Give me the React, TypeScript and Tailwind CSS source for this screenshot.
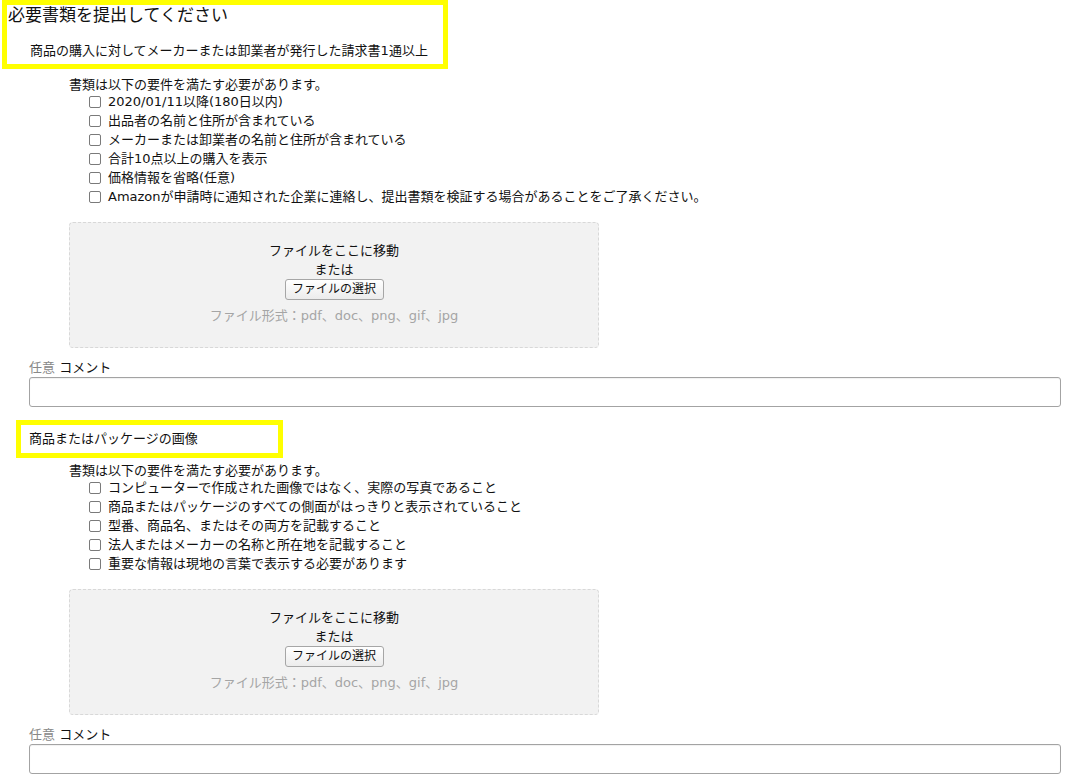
import React from "react";

const Check = ({ label }: { label: string }) => (
  <div className="flex items-center h-[19px] leading-[19px]">
    <span className="inline-block w-[12px] h-[12px] border border-[#7a7a7a] rounded-[2px] bg-white mr-[7px] ml-[-1px] shrink-0"></span>
    <span>{label}</span>
  </div>
);

const DropZone = () => (
  <div className="ml-[69px] w-[530px] h-[126px] bg-[#f2f2f2] border border-dashed border-[#d8d8d8] rounded-[4px] flex flex-col items-center pt-[18px] text-[13px] text-[#111]">
    <div className="leading-[19px]">ファイルをここに移動</div>
    <div className="leading-[19px]">または</div>
    <button className="h-[21px] w-[99px] text-[12px] leading-[19px] border border-[#a6a6a6] rounded-[3px] bg-gradient-to-b from-white to-[#ececec] text-[#111]">
      ファイルの選択
    </button>
    <div className="mt-[6px] leading-[19px] text-[#a5a5a5]">ファイル形式：pdf、doc、png、gif、jpg</div>
  </div>
);

const Comment = () => (
  <div className="pl-[29px] pr-[25px] mt-[11px]">
    <div className="text-[13px] leading-[18px]">
      <span className="text-[#888]">任意</span> <span className="text-[#111]">コメント</span>
    </div>
    <div className="h-[30px] border border-[#a3a3a3] rounded-[3px] bg-white shadow-[inset_0_1px_1px_rgba(0,0,0,0.06)]"></div>
  </div>
);

export default function App() {
  const req1 = [
    "2020/01/11以降(180日以内)",
    "出品者の名前と住所が含まれている",
    "メーカーまたは卸業者の名前と住所が含まれている",
    "合計10点以上の購入を表示",
    "価格情報を省略(任意)",
    "Amazonが申請時に通知された企業に連絡し、提出書類を検証する場合があることをご了承ください。",
  ];
  const req2 = [
    "コンピューターで作成された画像ではなく、実際の写真であること",
    "商品またはパッケージのすべての側面がはっきりと表示されていること",
    "型番、商品名、またはその両方を記載すること",
    "法人またはメーカーの名称と所在地を記載すること",
    "重要な情報は現地の言葉で表示する必要があります",
  ];
  return (
    <div className="w-[1086px] bg-white text-[#111] font-['DejaVu_Sans','Noto_Sans_CJK_JP',sans-serif]">
      {/* Section 1 */}
      <div className="ml-[2px] w-[446px] h-[69px] border-[5px] border-[#ffff00] pl-[1px]">
        <div className="text-[17px] leading-[20px] text-[#111]">必要書類を提出してください</div>
        <div className="mt-[17px] pl-[22px] text-[13px] leading-[18px]">
          商品の購入に対してメーカーまたは卸業者が発行した請求書1通以上
        </div>
      </div>
      <div className="ml-[69px] mt-[8px] text-[13px]">
        <div className="leading-[15px]">書類は以下の要件を満たす必要があります。</div>
        <div className="ml-[21px]">
          {req1.map((r) => (
            <Check key={r} label={r} />
          ))}
        </div>
      </div>
      <div className="mt-[16px]">
        <DropZone />
      </div>
      <Comment />

      {/* Section 2 */}
      <div className="mt-[13px] ml-[16px] w-[267px] h-[38px] border-[5px] border-[#ffff00] pl-[8px] flex items-center text-[13px]">
        商品またはパッケージの画像
      </div>
      <div className="ml-[69px] mt-[5px] text-[13px]">
        <div className="leading-[15px]">書類は以下の要件を満たす必要があります。</div>
        <div className="ml-[21px]">
          {req2.map((r) => (
            <Check key={r} label={r} />
          ))}
        </div>
      </div>
      <div className="mt-[16px]">
        <DropZone />
      </div>
      <Comment />
    </div>
  );
}
